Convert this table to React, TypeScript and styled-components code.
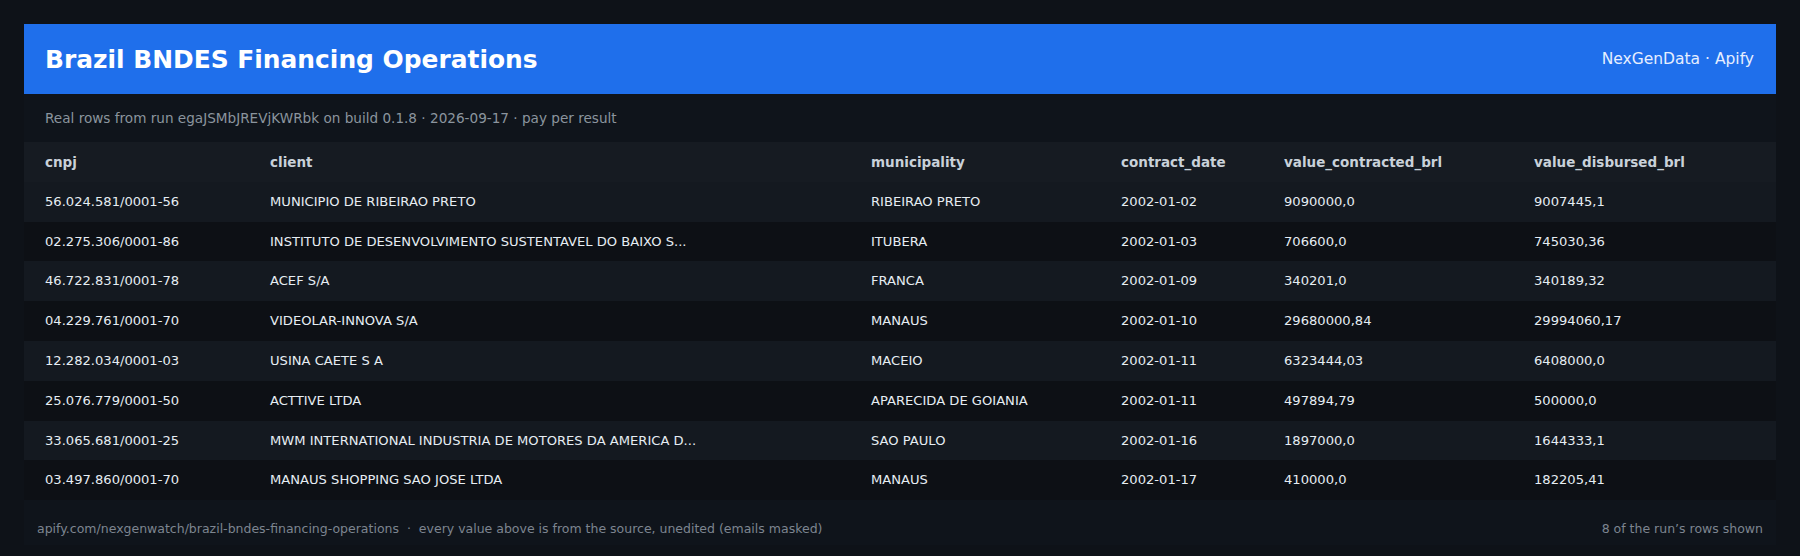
import React from 'react';
import styled, { createGlobalStyle } from 'styled-components';

const GlobalStyle = createGlobalStyle`
    html, body {
        margin: 0;
        padding: 0;
        background-color: #0e1218;
    }
    body {
        font-family: "DejaVu Sans", "Noto Sans", sans-serif;
    }
`;

const Page = styled.div`
    width: 1800px;
    height: 556px;
    box-sizing: border-box;
    padding: 24px 24px 12px;
`;

const Card = styled.div`
    background-color: #0f141b;
    display: flex;
    flex-direction: column;
`;

const Header = styled.header`
    height: 70px;
    background-color: #1f6feb;
    display: flex;
    align-items: center;
    justify-content: space-between;
    padding: 0 22px 0 21px;
`;

const Title = styled.h1`
    margin: 0;
    font-size: 24.9px;
    font-weight: 700;
    color: #ffffff;
`;

const Brand = styled.span`
    font-size: 15.5px;
    color: #e6eeff;
`;

const Subtitle = styled.p`
    margin: 0;
    padding: 16px 21px;
    line-height: 16px;
    font-size: 13.6px;
    color: #8b949e;
`;

const Table = styled.table`
    width: 100%;
    border-collapse: collapse;
    table-layout: fixed;
`;

const HeadCell = styled.th`
    text-align: left;
    padding: 13px 10px 11px 21px;
    line-height: 15.8px;
    font-size: 13.5px;
    font-weight: 700;
    color: #c9d1d9;
    background-color: #161b22;
`;

const Row = styled.tr<{ $odd: boolean }>`
    background-color: ${(p) => (p.$odd ? '#141920' : '#0d1015')};
`;

const Cell = styled.td`
    padding: 12px 10px 12px 21px;
    line-height: 15.8px;
    font-size: 13.1px;
    color: #e6edf3;
    white-space: nowrap;
    overflow: hidden;
`;

const Footer = styled.footer`
    display: flex;
    justify-content: space-between;
    padding: 21px 13px 9px;
    font-size: 12.5px;
    line-height: 15px;
    color: #7d8590;
`;

const columns = [
    { key: 'cnpj', width: 225 },
    { key: 'client', width: 601 },
    { key: 'municipality', width: 250 },
    { key: 'contract_date', width: 163 },
    { key: 'value_contracted_brl', width: 250 },
    { key: 'value_disbursed_brl', width: 263 },
];

const rows = [
    ['56.024.581/0001-56', 'MUNICIPIO DE RIBEIRAO PRETO', 'RIBEIRAO PRETO', '2002-01-02', '9090000,0', '9007445,1'],
    ['02.275.306/0001-86', 'INSTITUTO DE DESENVOLVIMENTO SUSTENTAVEL DO BAIXO S...', 'ITUBERA', '2002-01-03', '706600,0', '745030,36'],
    ['46.722.831/0001-78', 'ACEF S/A', 'FRANCA', '2002-01-09', '340201,0', '340189,32'],
    ['04.229.761/0001-70', 'VIDEOLAR-INNOVA S/A', 'MANAUS', '2002-01-10', '29680000,84', '29994060,17'],
    ['12.282.034/0001-03', 'USINA CAETE S A', 'MACEIO', '2002-01-11', '6323444,03', '6408000,0'],
    ['25.076.779/0001-50', 'ACTTIVE LTDA', 'APARECIDA DE GOIANIA', '2002-01-11', '497894,79', '500000,0'],
    ['33.065.681/0001-25', 'MWM INTERNATIONAL INDUSTRIA DE MOTORES DA AMERICA D...', 'SAO PAULO', '2002-01-16', '1897000,0', '1644333,1'],
    ['03.497.860/0001-70', 'MANAUS SHOPPING SAO JOSE LTDA', 'MANAUS', '2002-01-17', '410000,0', '182205,41'],
];

function App() {
    return (
        <>
            <GlobalStyle />
            <Page>
                <Card>
                    <Header>
                        <Title>Brazil BNDES Financing Operations</Title>
                        <Brand>NexGenData · Apify</Brand>
                    </Header>
                    <Subtitle>
                        Real rows from run egaJSMbJREVjKWRbk on build 0.1.8 · 2026-09-17 · pay per result
                    </Subtitle>
                    <Table>
                        <colgroup>
                            {columns.map((c) => (
                                <col key={c.key} style={{ width: c.width }} />
                            ))}
                        </colgroup>
                        <thead>
                            <tr>
                                {columns.map((c) => (
                                    <HeadCell key={c.key}>{c.key}</HeadCell>
                                ))}
                            </tr>
                        </thead>
                        <tbody>
                            {rows.map((r, i) => (
                                <Row key={r[0]} $odd={i % 2 === 0}>
                                    {r.map((v, j) => (
                                        <Cell key={j}>{v}</Cell>
                                    ))}
                                </Row>
                            ))}
                        </tbody>
                    </Table>
                    <Footer>
                        <span>
                            apify.com/nexgenwatch/brazil-bndes-financing-operations&nbsp; · &nbsp;every value above is from the source, unedited (emails masked)
                        </span>
                        <span>8 of the run’s rows shown</span>
                    </Footer>
                </Card>
            </Page>
        </>
    );
}

export default App;
